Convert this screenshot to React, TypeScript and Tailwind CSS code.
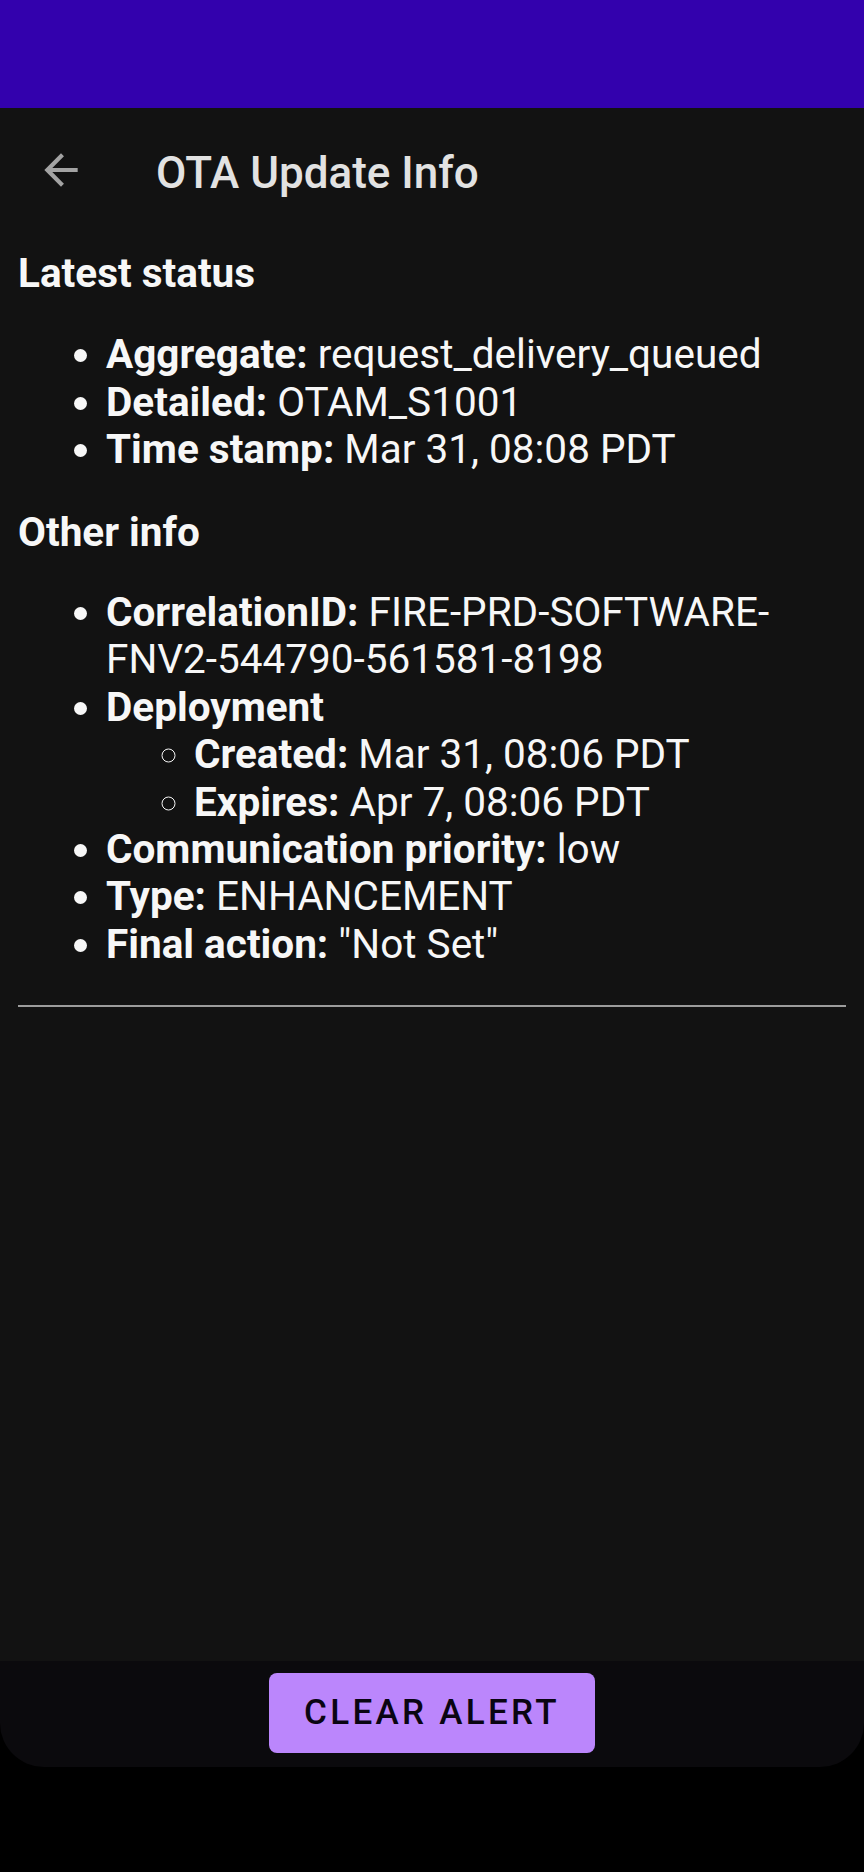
import React from "react";

const BackArrow = () => (
  <svg width="50" height="50" viewBox="0 0 24 24" fill="#a3a3a3">
    <path d="M20 11H7.83l5.59-5.59L12 4l-8 8 8 8 1.41-1.41L7.83 13H20v-2z" />
  </svg>
);

const Item = ({ label, value }: { label: string; value?: string }) => (
  <li>
    <span className="font-bold">{label}</span>
    {value ? " " + value : null}
  </li>
);

export default function App() {
  return (
    <div className="w-[864px] h-[1872px] bg-black flex flex-col font-['Roboto',sans-serif]">
      {/* status bar */}
      <div className="h-[108px] bg-[#3301ad] shrink-0" />

      <div className="flex-1 bg-[#121212] flex flex-col">
        {/* toolbar */}
        <div className="h-[118px] flex items-center shrink-0">
          <div className="ml-[36px] mt-[6px]">
            <BackArrow />
          </div>
          <h1 className="ml-[70px] mt-[12px] text-[44px] font-medium text-[#e2e2e2] leading-none">
            OTA Update Info
          </h1>
        </div>

        {/* webview content */}
        <div className="px-[18px] pt-[24px] text-[40.5px] leading-[47.4px] text-[#f7f7f7]">
          <h4 className="font-bold">Latest status</h4>
          <ul className="list-disc pl-[88px] mt-[34px]">
            <Item label="Aggregate:" value="request_delivery_queued" />
            <Item label="Detailed:" value="OTAM_S1001" />
            <Item label="Time stamp:" value="Mar 31, 08:08 PDT" />
          </ul>

          <h4 className="font-bold mt-[35px]">Other info</h4>
          <ul className="list-disc pl-[88px] mt-[33px]">
            <Item
              label="CorrelationID:"
              value="FIRE-PRD-SOFTWARE-FNV2-544790-561581-8198"
            />
            <li>
              <span className="font-bold">Deployment</span>
              <ul className="list-[circle] pl-[88px]">
                <Item label="Created:" value="Mar 31, 08:06 PDT" />
                <Item label="Expires:" value="Apr 7, 08:06 PDT" />
              </ul>
            </li>
            <Item label="Communication priority:" value="low" />
            <Item label="Type:" value="ENHANCEMENT" />
            <Item label="Final action:" value={'"Not Set"'} />
          </ul>

          <div className="mt-[37px] border-t-[2px] border-[#9c9c9c]" />
        </div>
      </div>

      {/* bottom action bar */}
      <div className="h-[106px] bg-[#0b0a0d] rounded-b-[44px] flex justify-center pt-[12px] shrink-0">
        <button className="w-[326px] h-[80px] rounded-[8px] bg-[#bb86fc] text-[#0a0512] text-[35px] font-medium tracking-[3.3px]">
          CLEAR ALERT
        </button>
      </div>
      <div className="h-[105px] bg-black shrink-0" />
    </div>
  );
}
